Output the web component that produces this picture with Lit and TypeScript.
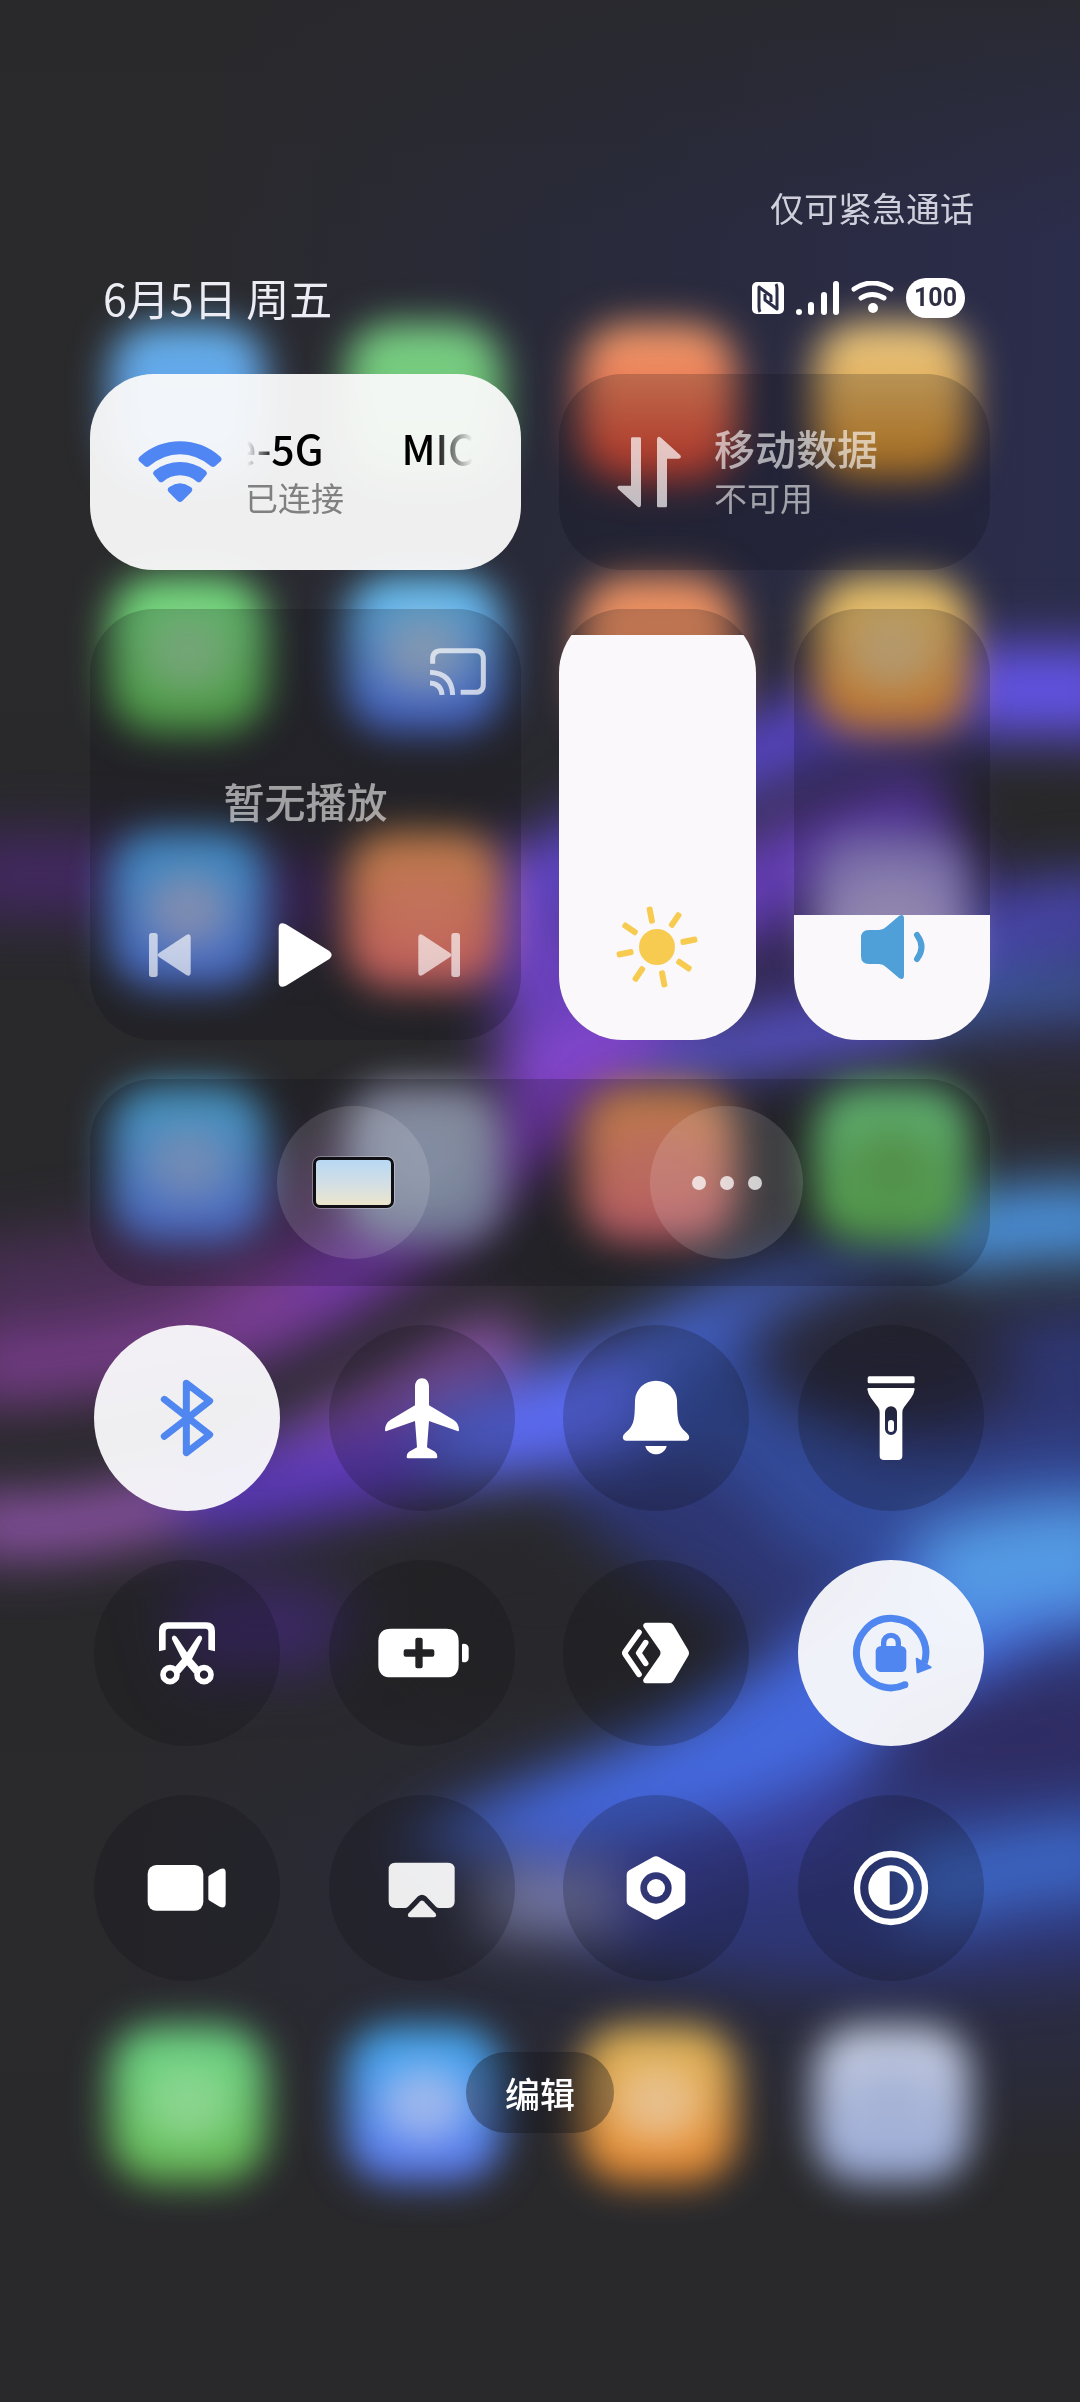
import { LitElement, css, html, svg, type TemplateResult } from "lit";
import { customElement, property, state } from "lit/decorators.js";
import { classMap } from "lit/directives/class-map.js";

interface Toggle {
  id: string;
  label: string;
  on: boolean;
  icon: TemplateResult;
}

interface HomeIcon {
  x: number;
  y: number;
  top: string;
  bottom: string;
  glow?: string;
}

interface Band {
  d: string;
  color: string;
  /* Stroke width; a band without one is a filled shape. */
  width?: number;
  opacity?: number;
}

/* Icons for the round toggles share a 300 unit box centred on the origin. */
const TOGGLES: Toggle[] = [
  {
    id: "bluetooth",
    label: "蓝牙",
    on: true,
    icon: svg`<path d="M-68 -56 L68 50 L-2 104 V-104 L68 -51 L-68 55" fill="none" stroke="currentColor"
      stroke-width="21" stroke-linecap="round" stroke-linejoin="round"/>`,
  },
  {
    id: "airplane",
    label: "飞行模式",
    on: false,
    icon: svg`<path d="M0 -119C12 -119 21 -109 21 -94V-38L94 5Q111 16 111 36Q111 41 106 39L21 9L15 88L39 101Q46 106 46 117
      Q46 121 42 121H-42Q-46 121 -46 117Q-46 106 -39 101L-15 88L-21 9L-106 39Q-111 41 -111 36Q-111 16 -94 5L-21 -38V-94
      C-21 -109 -12 -119 0 -119Z"/>`,
  },
  {
    id: "ring",
    label: "响铃",
    on: false,
    icon: svg`<path d="M0 -112C35 -112 62 -86 63 -52C64 -10 64 10 76 28C82 37 92 44 97 50C103 60 98 68 89 68H-89
      C-98 68 -103 60 -97 50C-92 44 -82 37 -76 28C-64 10 -64 -10 -63 -52C-62 -86 -35 -112 0 -112Z"/>
      <path d="M-32 84H32C29 99 15 109 0 109S-29 99 -32 84Z"/>`,
  },
  {
    id: "torch",
    label: "手电筒",
    on: false,
    icon: svg`<rect x="-70" y="-125" width="141" height="21" rx="5"/>
      <path fill-rule="evenodd" d="M-67 -90H68Q71 -90 71 -86Q69 -72 60 -60L39 -32Q34 -25 34 -16V113Q34 126 21 126H-21
      Q-34 126 -34 113V-16Q-34 -25 -39 -32L-60 -60Q-69 -72 -71 -86Q-71 -90 -67 -90Z
      M-18 -17V33A18 18 0 0 0 18 33V-17A18 18 0 0 0 -18 -17Z"/>
      <rect x="-9" y="6" width="18" height="36" rx="9"/>`,
  },
  {
    id: "screenshot",
    label: "截屏",
    on: false,
    icon: svg`<path d="M-84 -5V-66Q-84 -92 -58 -92H58Q84 -92 84 -66V-5L64 -10V-64Q64 -73 55 -73H-55Q-64 -73 -64 -64V-10Z"/>
      <path d="M-45 -41Q-47 -49 -41 -52Q-36 -54 -31 -48L8 10L38 44L22 62L-13 22Z"/>
      <path d="M45 -41Q47 -49 41 -52Q36 -54 31 -48L-8 10L-38 44L-22 62L13 22Z"/>
      <circle cx="-51" cy="65" r="21" fill="none" stroke="currentColor" stroke-width="17"/>
      <circle cx="51" cy="65" r="21" fill="none" stroke="currentColor" stroke-width="17"/>`,
  },
  {
    id: "saver",
    label: "省电模式",
    on: false,
    icon: svg`<path fill-rule="evenodd" d="M-93 -73H72Q110 -73 110 -35V35Q110 73 72 73H-93Q-131 73 -131 35V-35Q-131 -73 -93 -73Z
      M-20 -40V-11H-49Q-55 -11 -55 -5V5Q-55 11 -49 11H-20V40Q-20 46 -14 46H-4Q2 46 2 40V11H31Q37 11 37 5V-5Q37 -11 31 -11H2V-40
      Q2 -46 -4 -46H-14Q-20 -46 -20 -40Z"/>
      <path d="M120 -24Q120 -28 124 -28Q140 -28 140 -14V14Q140 28 124 28Q120 28 120 24Z"/>`,
  },
  {
    id: "connect",
    label: "互联",
    on: false,
    icon: svg`<path d="M-31 -91H38Q47 -91 52 -84L96 -10Q102 0 96 10L52 84Q47 91 38 91H-31Q-42 88 -37 77L11 8Q16 0 11 -8
      L-37 -77Q-42 -88 -31 -91Z"/>
      <path d="M-51 -62L-92 -4Q-95 0 -92 4L-51 64" fill="none" stroke="currentColor" stroke-width="17" stroke-linecap="round"/>
      <path d="M-31 -31L-52 0L-31 31" fill="none" stroke="currentColor" stroke-width="17" stroke-linecap="round" stroke-linejoin="round"/>`,
  },
  {
    id: "rotate",
    label: "方向锁定",
    on: true,
    icon: svg`<path d="M43 95A104 104 0 1 1 100 30" fill="none" stroke="currentColor" stroke-width="21" stroke-linejoin="round"/>
      <path d="M77 17L119 43L80 58Z" stroke="currentColor" stroke-width="6" stroke-linejoin="round"/>
      <circle cx="42" cy="95" r="10"/>
      <rect x="-46" y="-21" width="92" height="78" rx="16"/>
      <path d="M-22 -12V-31A22 22 0 0 1 22 -31V-12" fill="none" stroke="currentColor" stroke-width="16"/>`,
  },
  {
    id: "record",
    label: "屏幕录制",
    on: false,
    icon: svg`<rect x="-118" y="-69" width="167" height="137" rx="26"/>
      <path d="M64 -32Q64 -36 68 -38L98 -56Q116 -64 116 -46V46Q116 64 98 56L68 38Q64 36 64 32Z"/>`,
  },
  {
    id: "cast",
    label: "投屏",
    on: false,
    icon: svg`<g opacity="0.92"><path d="M-80 -76H78Q98 -76 98 -56V40Q98 60 78 60H52Q46 60 42 56L12 25Q0 16 -12 25L-42 56Q-46 60 -52 60
      H-80Q-100 60 -100 40V-56Q-100 -76 -80 -76Z"/>
      <path d="M-5 40Q0 35 5 40L40 76Q46 86 36 88H-36Q-46 86 -40 76Z"/></g>`,
  },
  {
    id: "settings",
    label: "设置",
    on: false,
    icon: svg`<path fill-rule="evenodd" d="M-10 -92Q0 -98 10 -92L79 -54Q88 -49 88 -39V39Q88 49 79 54L10 92Q0 98 -10 92L-79 54
      Q-88 49 -88 39V-39Q-88 -49 -79 -54ZM0 -47A47 47 0 0 0 0 47A47 47 0 0 0 0 -47Z"/>
      <circle r="27"/>`,
  },
  {
    id: "dark",
    label: "深色模式",
    on: false,
    icon: svg`<circle r="102" fill="none" stroke="currentColor" stroke-width="19"/>
      <circle r="59" fill="none" stroke="currentColor" stroke-width="18"/>
      <path d="M-4 -60V60A60 60 0 0 1 -4 -60Z"/>`,
  },
];

const COLUMNS = [188, 424, 658, 892];

const HOME_ICONS: HomeIcon[] = [
  { x: COLUMNS[0], y: 402, top: "#66b2ee", bottom: "#5c8fe0" },
  { x: COLUMNS[1], y: 402, top: "#7cd488", bottom: "#5fb060" },
  { x: COLUMNS[2], y: 402, top: "#f49c6c", bottom: "#d84430" },
  { x: COLUMNS[3], y: 400, top: "#ecc880", bottom: "#d08826" },
  { x: COLUMNS[0], y: 654, top: "#74dc80", bottom: "#60c054", glow: "#98cc9a" },
  { x: COLUMNS[1], y: 654, top: "#68c4f4", bottom: "#5478ec", glow: "#b0c0d4" },
  { x: COLUMNS[2], y: 654, top: "#f09464", bottom: "#e08458" },
  { x: COLUMNS[3], y: 654, top: "#e8c46c", bottom: "#ec9034", glow: "#dcc090" },
  { x: COLUMNS[0], y: 910, top: "#4cacec", bottom: "#5880ec", glow: "#b0b4d4" },
  { x: COLUMNS[1], y: 910, top: "#ec9858", bottom: "#f07470", glow: "#f08c70" },
  { x: COLUMNS[3], y: 910, top: "#9080cc", bottom: "#bcb0dc", glow: "#b4a8d4" },
  { x: COLUMNS[0], y: 1164, top: "#54b8ec", bottom: "#5c80ec", glow: "#98b0dc" },
  { x: COLUMNS[1], y: 1164, top: "#a4acc0", bottom: "#8c9ab4", glow: "#a4b0c8" },
  { x: COLUMNS[2], y: 1164, top: "#ec9858", bottom: "#e07078", glow: "#e88474" },
  { x: COLUMNS[3], y: 1164, top: "#74d888", bottom: "#64bc58", glow: "#64ac54" },
  { x: COLUMNS[0], y: 2104, top: "#6cd484", bottom: "#68bc58", glow: "#94d898" },
  { x: COLUMNS[1], y: 2104, top: "#44a8f0", bottom: "#5c7cf0", glow: "#b0c0ec" },
  { x: COLUMNS[2], y: 2104, top: "#e0b458", bottom: "#e88c34", glow: "#e8c8a0" },
  { x: COLUMNS[3], y: 2104, top: "#c4cce0", bottom: "#9cacd8", glow: "#a4b0d4" },
];

const BANDS: Band[] = [
  { d: "M1130 740C1000 780 860 830 740 940V1040H1130Z", color: "#34265e", opacity: 0.75 },
  { d: "M560 1400C760 1300 900 1340 1130 1300V1960C960 1980 760 2000 560 1940C440 1900 700 1700 760 1640C640 1560 480 1480 560 1400Z", color: "#303a84", opacity: 0.8 },
  { d: "M560 1420C680 1380 760 1400 800 1460S900 1540 1130 1500", color: "#3450a4", width: 120, opacity: 0.8 },
  { d: "M560 1900C640 1840 760 1780 860 1800", color: "#3c40a0", width: 140, opacity: 0.7 },
  { d: "M-40 1240C120 1240 300 1160 420 1100L520 1180C420 1340 200 1400 -40 1400Z", color: "#50305e", opacity: 0.8 },
  { d: "M-40 880C80 860 200 900 340 900", color: "#4a2870", width: 80, opacity: 0.8 },
  { d: "M460 940C560 880 640 800 760 750S960 680 1130 680", color: "#5a46cc", width: 70 },
  { d: "M960 690H1130", color: "#6454e8", width: 90 },
  { d: "M500 1000C620 960 720 900 800 860S900 830 950 800", color: "#6a40c4", width: 90, opacity: 0.9 },
  { d: "M500 850C530 890 530 960 500 1000", color: "#7848d0", width: 60, opacity: 0.8 },
  { d: "M1130 915C1060 900 1000 930 900 960", color: "#4846ac", width: 70 },
  { d: "M1130 990C1040 985 980 1000 860 1020", color: "#3c5c9c", width: 50 },
  { d: "M520 1070C700 1060 820 1030 920 1015", color: "#5854cc", width: 60 },
  { d: "M660 960C640 1040 580 1090 500 1150S340 1290 220 1340", color: "#7a3ab4", width: 70 },
  { d: "M640 1030C580 1050 540 1060 500 1080", color: "#8448d0", width: 60 },
  { d: "M300 1280C200 1350 80 1370 -40 1370", color: "#7e4090", width: 70, opacity: 0.85 },
  { d: "M-40 1524C120 1540 240 1480 340 1430S440 1360 520 1340", color: "#9858b4", width: 54 },
  { d: "M180 1500C340 1480 420 1450 560 1430", color: "#5a38b8", width: 80 },
  { d: "M420 1480C560 1450 640 1390 760 1320S980 1250 1130 1230L1130 1190C980 1210 860 1240 760 1270S540 1390 420 1400Z", color: "#4664cc" },
  { d: "M460 1440C540 1430 580 1410 640 1385", color: "#5c6cf4", width: 90 },
  { d: "M940 1240C1000 1222 1060 1222 1130 1222", color: "#4c94e0", width: 76 },
  { d: "M1130 1500C960 1500 880 1590 760 1670S500 1780 400 1850C560 1850 720 1840 860 1760S1020 1630 1130 1630Z", color: "#4468dc" },
  { d: "M1130 1560C1060 1550 1000 1560 930 1590", color: "#549ae4", width: 110 },
  { d: "M1130 1860C1060 1850 980 1880 900 1890", color: "#3c66c4", width: 80 },
  { d: "M180 1640C240 1620 300 1620 340 1640", color: "#42287a", width: 90, opacity: 0.7 },
  { d: "M480 1900H620", color: "#7c80a8", width: 70, opacity: 0.9 },
];

@customElement("wallpaper-backdrop")
export class WallpaperBackdrop extends LitElement {
  static styles = css`
    :host {
      display: block;
    }
    .scene {
      display: block;
      width: 100%;
      height: 100%;
    }
  `;

  render() {
    return html`
      <svg class="scene" viewBox="0 0 1080 2402" preserveAspectRatio="xMidYMid slice" aria-hidden="true">
        <defs>
          <linearGradient id="base" x1="0" y1="0" x2="1" y2="0.1">
            <stop offset="0.15" stop-color="#2a2a2c" />
            <stop offset="0.6" stop-color="#292a3c" />
            <stop offset="1" stop-color="#2b2d4c" />
          </linearGradient>
          <linearGradient id="fade" x1="0" y1="0" x2="0" y2="1">
            <stop offset="0" stop-color="#29292c" stop-opacity="0.8" />
            <stop offset="0.1" stop-color="#29292c" stop-opacity="0" />
            <stop offset="0.24" stop-color="#29292c" stop-opacity="0" />
            <stop offset="0.34" stop-color="#29292c" />
            <stop offset="0.7" stop-color="#29292c" />
            <stop offset="0.77" stop-color="#29292c" stop-opacity="0" />
            <stop offset="0.83" stop-color="#29292c" stop-opacity="0.2" />
            <stop offset="0.9" stop-color="#29292c" />
          </linearGradient>
          <filter id="soft" x="-100" y="500" width="1300" height="1600" filterUnits="userSpaceOnUse"
            color-interpolation-filters="sRGB">
            <feGaussianBlur stdDeviation="28" />
          </filter>
          <filter id="icon-blur" x="-50%" y="-50%" width="200%" height="200%" color-interpolation-filters="sRGB">
            <feGaussianBlur stdDeviation="19" />
          </filter>
          ${HOME_ICONS.map(
            (icon, i) => svg`
              <linearGradient id="icon-${i}" x1="0" y1="0" x2="0" y2="1">
                <stop offset="0.1" stop-color=${icon.top} />
                <stop offset="0.9" stop-color=${icon.bottom} />
              </linearGradient>`
          )}
        </defs>
        <rect width="1080" height="2402" fill="url(#base)" />
        <rect width="1080" height="2402" fill="url(#fade)" />
        <g filter="url(#soft)">
          ${BANDS.map((band) =>
            band.width
              ? svg`<path d=${band.d} fill="none" stroke=${band.color} stroke-width=${band.width}
                  opacity=${band.opacity ?? 1} />`
              : svg`<path d=${band.d} fill=${band.color} opacity=${band.opacity ?? 1} />`
          )}
          <ellipse cx="1060" cy="816" rx="110" ry="60" fill="#28282a" />
          <ellipse cx="1060" cy="1105" rx="140" ry="60" fill="#2b2b34" />
          <ellipse cx="890" cy="1370" rx="130" ry="60" fill="#27273a" />
          <ellipse cx="540" cy="1610" rx="120" ry="76" fill="#28282c" />
          <ellipse cx="1010" cy="1735" rx="130" ry="48" fill="#2f2c62" />
        </g>
        ${HOME_ICONS.map(
          (icon, i) => svg`
            <g filter="url(#icon-blur)">
              <rect x=${icon.x - 78} y=${icon.y - 78} width="156" height="156" rx="46" fill="url(#icon-${i})" />
              ${icon.glow ? svg`<ellipse cx=${icon.x} cy=${icon.y} rx="44" ry="38" fill=${icon.glow} opacity="0.8" />` : ""}
            </g>`
        )}
      </svg>
    `;
  }
}

@customElement("level-slider")
export class LevelSlider extends LitElement {
  @property() label = "";
  @property({ type: Number }) value = 0;
  @property({ attribute: false }) icon?: TemplateResult;

  static styles = css`
    :host {
      display: block;
    }
    .slider {
      display: grid;
      height: 100%;
      overflow: hidden;
      border-radius: 64px;
      background: rgba(12, 12, 20, 0.2);
    }
    .fill,
    .glyph,
    .range {
      grid-area: 1 / 1;
    }
    .fill {
      align-self: end;
      background: #faf8fa;
    }
    .glyph {
      align-self: end;
      justify-self: center;
      width: 84px;
      height: 84px;
      margin-bottom: 51px;
    }
    .range {
      width: 100%;
      height: 100%;
      margin: 0;
      opacity: 0;
      writing-mode: vertical-lr;
      direction: rtl;
    }
  `;

  private onInput(event: Event) {
    this.value = Number((event.target as HTMLInputElement).value);
  }

  render() {
    return html`
      <label class="slider">
        <span class="fill" style="height: ${this.value}%"></span>
        <svg class="glyph" viewBox="-42 -42 84 84" aria-hidden="true">${this.icon}</svg>
        <input class="range" type="range" min="0" max="100" aria-label=${this.label}
          .value=${String(this.value)} @input=${this.onInput} />
      </label>
    `;
  }
}

const SUN = svg`
  <circle r="18" fill="#f6cb50" />
  ${[0, 1, 2, 3, 4, 5, 6, 7].map(
    (i) => svg`<rect x="-3" y="-41" width="6" height="17" rx="2" fill="#f6cb50" transform="rotate(${i * 45 - 11})" />`
  )}`;

const SPEAKER = svg`
  <path fill="#4f9fd8" d="M-31 -9Q-31 -17 -23 -17H-13Q-9 -17 -6 -20L7 -31Q12 -34 12 -28V28Q12 34 7 31L-6 20Q-9 17 -13 17
    H-23Q-31 17 -31 9Z" />
  <path d="M25 -12Q34 0 25 12" fill="none" stroke="#4f9fd8" stroke-width="6" stroke-linecap="round" />`;

@customElement("app-root")
export class AppRoot extends LitElement {
  @state() private toggles = TOGGLES;
  @state() private playing = false;

  static styles = css`
    :host {
      display: block;
      position: relative;
      min-height: 100vh;
      overflow: hidden;
      background: #29292c;
      color: #fff;
      font-family: "Noto Sans CJK SC", "Noto Sans", sans-serif;
    }
    .backdrop {
      position: absolute;
      inset: 0;
    }
    .panel {
      position: relative;
      display: flex;
      flex-direction: column;
      padding: 185px 90px 120px;
    }
    button {
      margin: 0;
      padding: 0;
      border: 0;
      background: none;
      color: inherit;
      font: inherit;
      cursor: pointer;
    }
    svg {
      display: block;
      fill: currentColor;
    }
    .carrier {
      margin: 0 16px 40px 0;
      font-size: 34px;
      line-height: 46px;
      text-align: right;
      color: #d0d0dc;
    }
    .status {
      display: flex;
      align-items: flex-end;
      justify-content: space-between;
      margin: 0 25px 51px 13px;
    }
    .date {
      font-size: 43px;
      line-height: 52px;
      color: #ececf4;
    }
    .indicators {
      display: flex;
      align-items: center;
      gap: 12px;
      padding-bottom: 5px;
    }
    .battery {
      display: flex;
      align-items: center;
      justify-content: center;
      width: 59px;
      height: 40px;
      border-radius: 20px;
      background: #fff;
      color: #2e2e44;
      font: 700 25px/40px Roboto, sans-serif;
    }
    .tiles {
      display: grid;
      grid-template-columns: repeat(4, minmax(0, 1fr));
      grid-template-rows: 196px 431px 207px;
      gap: 39px 38px;
      margin-bottom: 39px;
    }
    .card {
      grid-column: span 2;
      border-radius: 64px;
      background: rgba(12, 12, 20, 0.2);
    }
    .network {
      display: flex;
      align-items: center;
      gap: 23px;
      padding: 0 48px;
      text-align: left;
    }
    .network.on {
      background: rgba(250, 250, 250, 0.95);
      color: #000;
    }
    .network-icon {
      flex: none;
      width: 84px;
      height: 84px;
      color: rgba(255, 255, 255, 0.7);
    }
    .network.on .network-icon {
      color: #4f86f4;
    }
    .network-text {
      flex: 1;
      min-width: 0;
    }
    .network-name,
    .network-state {
      display: block;
      white-space: nowrap;
    }
    .network-name {
      font-size: 41px;
      font-weight: 500;
      line-height: 50px;
      color: rgba(255, 255, 255, 0.62);
    }
    .network-state {
      font-size: 33px;
      line-height: 50px;
      color: rgba(255, 255, 255, 0.58);
    }
    .network.on .network-name {
      color: #000;
    }
    .network.on .network-state {
      color: #808080;
    }
    .network-name.marquee {
      display: flex;
      gap: 78px;
      overflow: hidden;
      -webkit-mask-image: linear-gradient(to right, transparent 2px, #000 30px, #000 calc(100% - 40px), transparent);
      mask-image: linear-gradient(to right, transparent 2px, #000 30px, #000 calc(100% - 40px), transparent);
    }
    .marquee-item:first-child {
      margin-left: -12px;
    }
    .media {
      display: flex;
      flex-direction: column;
      padding: 39px 35px 53px;
      box-sizing: border-box;
    }
    .media-cast {
      align-self: flex-end;
      color: rgba(255, 255, 255, 0.7);
    }
    .media-title {
      margin: 79px 0 auto;
      font-size: 41px;
      font-weight: 500;
      line-height: 52px;
      text-align: center;
      color: rgba(255, 255, 255, 0.58);
    }
    .media-controls {
      display: flex;
      align-items: center;
      justify-content: space-between;
      padding: 0 26px 0 24px;
    }
    .media-skip {
      color: rgba(255, 255, 255, 0.65);
    }
    .devices {
      grid-column: 1 / -1;
      display: flex;
      align-items: center;
      justify-content: space-between;
      padding: 0 187px;
    }
    .device {
      display: grid;
      place-items: center;
      width: 153px;
      height: 153px;
      border-radius: 50%;
      background: rgba(255, 255, 255, 0.13);
    }
    .screen {
      width: 75px;
      height: 45px;
      border: 3px solid #101014;
      border-radius: 7px;
      outline: 1px solid rgba(255, 255, 255, 0.3);
      background: linear-gradient(#b8d8f4, #d4dfe4 55%, #ece6cc);
    }
    .toggles {
      display: grid;
      grid-template-columns: repeat(4, 186px);
      justify-content: space-between;
      row-gap: 49px;
      margin: 0 6px 71px 4px;
    }
    .toggle {
      display: grid;
      place-items: center;
      height: 186px;
      border-radius: 50%;
      background: rgba(12, 12, 20, 0.22);
    }
    .toggle.on {
      background: rgba(250, 250, 252, 0.95);
      color: #4f86f0;
    }
    .edit {
      align-self: center;
      width: 148px;
      height: 81px;
      border-radius: 41px;
      background: rgba(20, 20, 26, 0.36);
      font-size: 35px;
      font-weight: 500;
      line-height: 78px;
    }
  `;

  private flip(id: string) {
    this.toggles = this.toggles.map((t) => (t.id === id ? { ...t, on: !t.on } : t));
  }

  private renderIndicators() {
    return html`
      <div class="indicators">
        <svg width="32" height="32" viewBox="0 0 32 32" role="img" aria-label="NFC">
          <rect width="32" height="32" rx="5" />
          <path d="M8 30Q7 28 7 25V5L19 14V20M24 2Q25 4 25 7V27L13 18V12" fill="none" stroke="#2b2c46"
            stroke-width="3" stroke-linejoin="round" />
        </svg>
        <svg width="43" height="34" viewBox="0 0 43 34" role="img" aria-label="信号">
          <circle cx="3" cy="31" r="3" />
          <rect x="12" y="21" width="6" height="13" rx="3" />
          <rect x="25" y="11" width="6" height="23" rx="3" />
          <rect x="37" y="0" width="6" height="34" rx="3" />
        </svg>
        <svg width="43" height="34" viewBox="0 0 43 34" role="img" aria-label="WLAN">
          <path d="M3 8Q21 -4 40 8M10 17Q21 10 33 17" fill="none" stroke="currentColor" stroke-width="5" stroke-linecap="round" />
          <circle cx="22" cy="27" r="5" />
        </svg>
        <span class="battery">100</span>
      </div>
    `;
  }

  private renderMedia() {
    return html`
      <section class="card media">
        <button class="media-cast" aria-label="投放">
          <svg width="56" height="47" viewBox="0 0 168 141" aria-hidden="true">
            <path d="M8 47V33Q8 8 33 8H136Q160 8 160 33V108Q160 133 136 133H92" fill="none" stroke="currentColor" stroke-width="15" />
            <path d="M0 73Q66 76 68 141M0 105Q34 107 36 141" fill="none" stroke="currentColor" stroke-width="15" />
          </svg>
        </button>
        <p class="media-title">暂无播放</p>
        <div class="media-controls">
          <button class="media-skip" aria-label="上一首">
            <svg width="42" height="44" viewBox="0 0 126 132" aria-hidden="true">
              <rect width="26" height="132" rx="8" />
              <path d="M30 60L112 6Q124 0 125 12V120Q124 132 112 126L30 72Q22 66 30 60Z" />
            </svg>
          </button>
          <button aria-label=${this.playing ? "暂停" : "播放"} @click=${() => (this.playing = !this.playing)}>
            <svg width="54" height="64" viewBox="0 0 162 192" aria-hidden="true">
              ${this.playing
                ? svg`<rect x="20" width="40" height="192" rx="10" /><rect x="100" width="40" height="192" rx="10" />`
                : svg`<path d="M2 16Q2 -6 24 4L154 84Q168 96 154 108L24 188Q2 198 2 176Z" />`}
            </svg>
          </button>
          <button class="media-skip" aria-label="下一首">
            <svg width="42" height="44" viewBox="0 0 126 132" aria-hidden="true">
              <rect x="100" width="26" height="132" rx="8" />
              <path d="M96 60L14 6Q2 0 1 12V120Q2 132 14 126L96 72Q104 66 96 60Z" />
            </svg>
          </button>
        </div>
      </section>
    `;
  }

  render() {
    return html`
      <wallpaper-backdrop class="backdrop"></wallpaper-backdrop>
      <main class="panel">
        <p class="carrier">仅可紧急通话</p>
        <header class="status">
          <time class="date">6月5日 周五</time>
          ${this.renderIndicators()}
        </header>

        <div class="tiles">
          <button class="card network on">
            <svg class="network-icon" viewBox="-126 -126 252 252" aria-hidden="true">
              <path d="M-122 -32Q-128 -40 -121 -46Q-68 -92 0 -92T121 -46Q128 -40 122 -32L105 -17Q99 -13 93 -17
                Q50 -53 0 -53T-93 -17Q-99 -13 -105 -17Z" />
              <path d="M-78 10Q-84 3 -77 -4Q-42 -30 0 -30T77 -4Q84 3 78 10L62 29Q57 33 51 29Q28 10 0 10T-51 29Q-57 33 -62 29Z" />
              <path d="M-34 60Q-41 51 -32 45Q-16 34 0 34T32 45Q41 51 34 60L7 87Q0 93 -7 87Z" />
            </svg>
            <span class="network-text">
              <span class="network-name marquee">
                <span class="marquee-item">e-5G</span>
                <span class="marquee-item">MIC</span>
              </span>
              <span class="network-state">已连接</span>
            </span>
          </button>
          <button class="card network">
            <svg class="network-icon" viewBox="-126 -126 252 252" aria-hidden="true">
              <path d="M-54 -100Q-54 -104 -50 -104H-28Q-24 -104 -24 -100V99Q-26 110 -34 104L-92 52Q-98 43 -90 41H-54Z" />
              <path d="M24 102Q24 106 28 106H50Q54 106 54 102V-40H90Q99 -42 94 -50L36 -103Q25 -110 24 -98Z" />
            </svg>
            <span class="network-text">
              <span class="network-name">移动数据</span>
              <span class="network-state">不可用</span>
            </span>
          </button>

          ${this.renderMedia()}
          <level-slider label="亮度" .value=${94} .icon=${SUN}></level-slider>
          <level-slider label="音量" .value=${29} .icon=${SPEAKER}></level-slider>

          <section class="card devices">
            <button class="device" aria-label="设备"><span class="screen"></span></button>
            <button class="device" aria-label="更多">
              <svg width="70" height="14" viewBox="0 0 70 14" opacity="0.75" aria-hidden="true">
                <circle cx="7" cy="7" r="7" />
                <circle cx="35" cy="7" r="7" />
                <circle cx="63" cy="7" r="7" />
              </svg>
            </button>
          </section>
        </div>

        <div class="toggles">
          ${this.toggles.map(
            (t) => html`
              <button class=${classMap({ toggle: true, on: t.on })} aria-label=${t.label} aria-pressed=${t.on}
                @click=${() => this.flip(t.id)}>
                <svg width="100" height="100" viewBox="-150 -150 300 300" aria-hidden="true">${t.icon}</svg>
              </button>
            `
          )}
        </div>

        <button class="edit">编辑</button>
      </main>
    `;
  }
}
